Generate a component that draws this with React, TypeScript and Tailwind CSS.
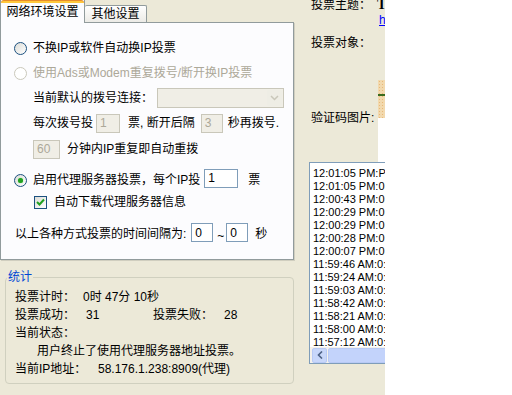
import React from "react";

const font = "font-['Liberation_Sans','Noto_Sans_CJK_SC',sans-serif]";

function Radio({ checked = false, disabled = false }: { checked?: boolean; disabled?: boolean }) {
  return (
    <span
      className={
        "flex h-[13px] w-[13px] shrink-0 items-center justify-center rounded-full border " +
        (disabled
          ? "border-[#CAC8BB] bg-white"
          : "border-[#1C5180] bg-gradient-to-br from-[#DCDCD7] to-white")
      }
    >
      {checked && <span className="h-[5px] w-[5px] rounded-full bg-[#21A121] shadow-[0_0_1px_#55D551]" />}
    </span>
  );
}

function Checkbox() {
  return (
    <span className="flex h-[13px] w-[13px] shrink-0 items-center justify-center border border-[#1C5180] bg-gradient-to-br from-[#DCDCD7] to-white">
      <svg width="9" height="9" viewBox="0 0 9 9">
        <path d="M1 4 L3.5 6.5 L8 1.5" fill="none" stroke="#21A121" strokeWidth="2" />
      </svg>
    </span>
  );
}

function Field({ value, w, disabled = false }: { value: string; w: string; disabled?: boolean }) {
  return (
    <span
      className={
        "flex h-[19px] shrink-0 items-center border pl-[3px] text-[12px] " +
        w +
        (disabled
          ? " border-[#C9C7BA] bg-[#F0EEE6] text-[#ACA899]"
          : " border-[#7F9DB9] bg-white text-black")
      }
    >
      {value}
    </span>
  );
}

const logLines = [
  "12:01:05 PM:P",
  "12:01:05 PM:0:",
  "12:00:43 PM:0:",
  "12:00:29 PM:0:",
  "12:00:29 PM:0:",
  "12:00:28 PM:0:",
  "12:00:07 PM:0:",
  "11:59:46 AM:0:",
  "11:59:24 AM:0:",
  "11:59:03 AM:0:",
  "11:58:42 AM:0:",
  "11:58:21 AM:0:",
  "11:58:00 AM:0:",
  "11:57:12 AM:0:",
];

export default function App() {
  return (
    <div className={"flex h-[395px] w-[512px] overflow-hidden bg-[#ECE9D8] text-[12px] leading-[14px] text-black " + font}>
      {/* left: settings tabs + stats */}
      <div className="flex w-[295px] shrink-0 flex-col">
        <div className="flex h-[22px] items-end">
          <div className="relative z-10 -mb-px flex h-[23px] w-[85px] flex-col border-x border-[#919B9C] bg-[#FCFCFE]">
            <div className="h-[3px] rounded-t-[3px] border-t border-[#E68B2C] bg-[#FFC83C]" />
            <div className="flex flex-1 items-center justify-center pb-[2px]">网络环境设置</div>
          </div>
          <div className="flex h-[17px] w-[62px] items-center justify-center rounded-t-[2px] border-t border-r border-[#919B9C] bg-gradient-to-b from-white to-[#ECEBE6]">
            其他设置
          </div>
        </div>

        <div className="flex h-[238px] w-[294px] flex-col border border-[#919B9C] bg-[#FCFCFE] shadow-[1px_1px_0_#D0CEBF]">
          <div className="h-[13px]" />
          <div className="flex h-[24px] items-center gap-[6px] pl-[13px]">
            <Radio />
            <span>不换IP或软件自动换IP投票</span>
          </div>
          <div className="flex h-[26px] items-center gap-[6px] pl-[13px] text-[#ACA899]">
            <Radio disabled />
            <span>使用Ads或Modem重复拨号/断开换IP投票</span>
          </div>
          <div className="flex h-[24px] items-center pl-[32px]">
            <span>当前默认的拨号连接：</span>
            <span className="ml-[4px] flex h-[20px] w-[127px] items-center justify-end border border-[#C9C7BA] bg-[#F0EEE6] pr-px">
              <span className="flex h-[16px] w-[15px] items-center justify-center rounded-[2px] bg-[#EEEDE5]">
                <svg width="9" height="6" viewBox="0 0 9 6">
                  <path d="M1 1 L4.5 4.5 L8 1" fill="none" stroke="#C9C7BA" strokeWidth="1.5" />
                </svg>
              </span>
            </span>
          </div>
          <div className="flex h-[26px] items-center pl-[32px]">
            <span>每次拨号投</span>
            <span className="ml-[3px]"><Field value="1" w="w-[24px]" disabled /></span>
            <span className="ml-[8px]">票, 断开后隔</span>
            <span className="ml-[6px]"><Field value="3" w="w-[22px]" disabled /></span>
            <span className="ml-[5px]">秒再拨号.</span>
          </div>
          <div className="flex h-[26px] items-center pl-[32px]">
            <Field value="60" w="w-[27px]" disabled />
            <span className="ml-[7px]">分钟内IP重复即自动重拨</span>
          </div>
          <div className="h-[4px]" />
          <div className="flex h-[28px] items-center pl-[13px]">
            <Radio checked />
            <span className="ml-[6px]">启用代理服务器投票，每个IP投</span>
            <span className="ml-[4px] -mt-[4px]"><Field value="1" w="w-[34px]" /></span>
            <span className="ml-[10px]">票</span>
          </div>
          <div className="flex h-[16px] items-center pl-[33px]">
            <Checkbox />
            <span className="ml-[7px]">自动下载代理服务器信息</span>
          </div>
          <div className="h-[12px]" />
          <div className="flex h-[24px] items-center pl-[14px]">
            <span>以上各种方式投票的时间间隔为:</span>
            <span className="ml-[5px] -mt-[3px]"><Field value="0" w="w-[22px]" /></span>
            <span className="ml-[4px] mt-[4px]">~</span>
            <span className="ml-[2px] -mt-[3px]"><Field value="0" w="w-[22px]" /></span>
            <span className="ml-[7px]">秒</span>
          </div>
        </div>

        <div className="relative ml-[5px] mt-[17px] h-[107px] w-[289px] rounded-[4px] border border-[#D0D0BF] pl-[9px] pt-[10px]">
          <span className="absolute -top-[8px] left-[1px] bg-[#ECE9D8] px-px text-[#0046D5]">统计</span>
          <div className="flex h-[18px] items-center">
            <span className="w-[68px]">投票计时：</span>
            <span>0时 47分 10秒</span>
          </div>
          <div className="flex h-[18px] items-center">
            <span className="w-[71px]">投票成功：</span>
            <span className="w-[67px]">31</span>
            <span className="w-[71px]">投票失败：</span>
            <span>28</span>
          </div>
          <div className="flex h-[18px] items-center">当前状态：</div>
          <div className="flex h-[18px] items-center pl-[22px]">用户终止了使用代理服务器地址投票。</div>
          <div className="flex h-[18px] items-center">
            <span className="w-[83px]">当前IP地址：</span>
            <span>58.176.1.238:8909(代理)</span>
          </div>
        </div>
      </div>

      {/* middle: vote info + log list */}
      <div className="flex w-[90px] shrink-0 flex-col overflow-hidden">
        <div className="-mt-[1px] flex h-[12px] items-center whitespace-nowrap pl-[16px]">
          <span className="w-[66px] shrink-0">投票主题：</span>
          <span className="font-['Liberation_Serif',serif] text-[14px] font-bold">T.</span>
        </div>
        <div className="mt-[3px] flex h-[12px] items-center pl-[84px]">
          <span className="text-[#0000FF] underline">h</span>
        </div>
        <div className="mt-[11px] flex h-[12px] items-center pl-[16px] whitespace-nowrap">投票对象：</div>
        <div className="mt-[31px] flex h-[82px]">
          <div className="w-[83px] shrink-0 whitespace-nowrap pl-[16px] pt-[31px]">验证码图片:</div>
          <div className="flex w-[7px] flex-col">
            <div className="flex h-[38px] flex-col justify-center bg-[#F2D9AE] bg-[radial-gradient(#E8B878_1px,transparent_1px)] bg-[length:3px_3px]">
              <div className="mb-[8px] h-[2px] bg-[#3A6B1F]" />
            </div>
            <div className="flex-1 bg-white" />
          </div>
        </div>
        <div className="ml-[14px] flex h-[202px] w-[120px] shrink-0 flex-col border border-[#7F9DB9] bg-white">
          <div className="flex-1 overflow-hidden pl-[3px] pt-[4px] text-[11px] leading-[13px]">
            {logLines.map((l, i) => (
              <div key={i} className="whitespace-nowrap">{l}</div>
            ))}
          </div>
          <div className="flex h-[16px] items-center gap-px bg-[#F3F1EC] pl-[2px]">
            <span className="flex h-[15px] w-[15px] items-center justify-center rounded-[2px] border border-[#B8CAF5] bg-[#C8D7FA]">
              <svg width="6" height="8" viewBox="0 0 6 8">
                <path d="M5 0.5 L1.5 4 L5 7.5" fill="none" stroke="#4D6185" strokeWidth="1.6" />
              </svg>
            </span>
            <span className="h-[15px] flex-1 rounded-[2px] border border-[#B8CAF5] bg-[#C3D3FB]" />
          </div>
        </div>
      </div>

      {/* right: blank */}
      <div className="flex-1 bg-white" />
    </div>
  );
}
